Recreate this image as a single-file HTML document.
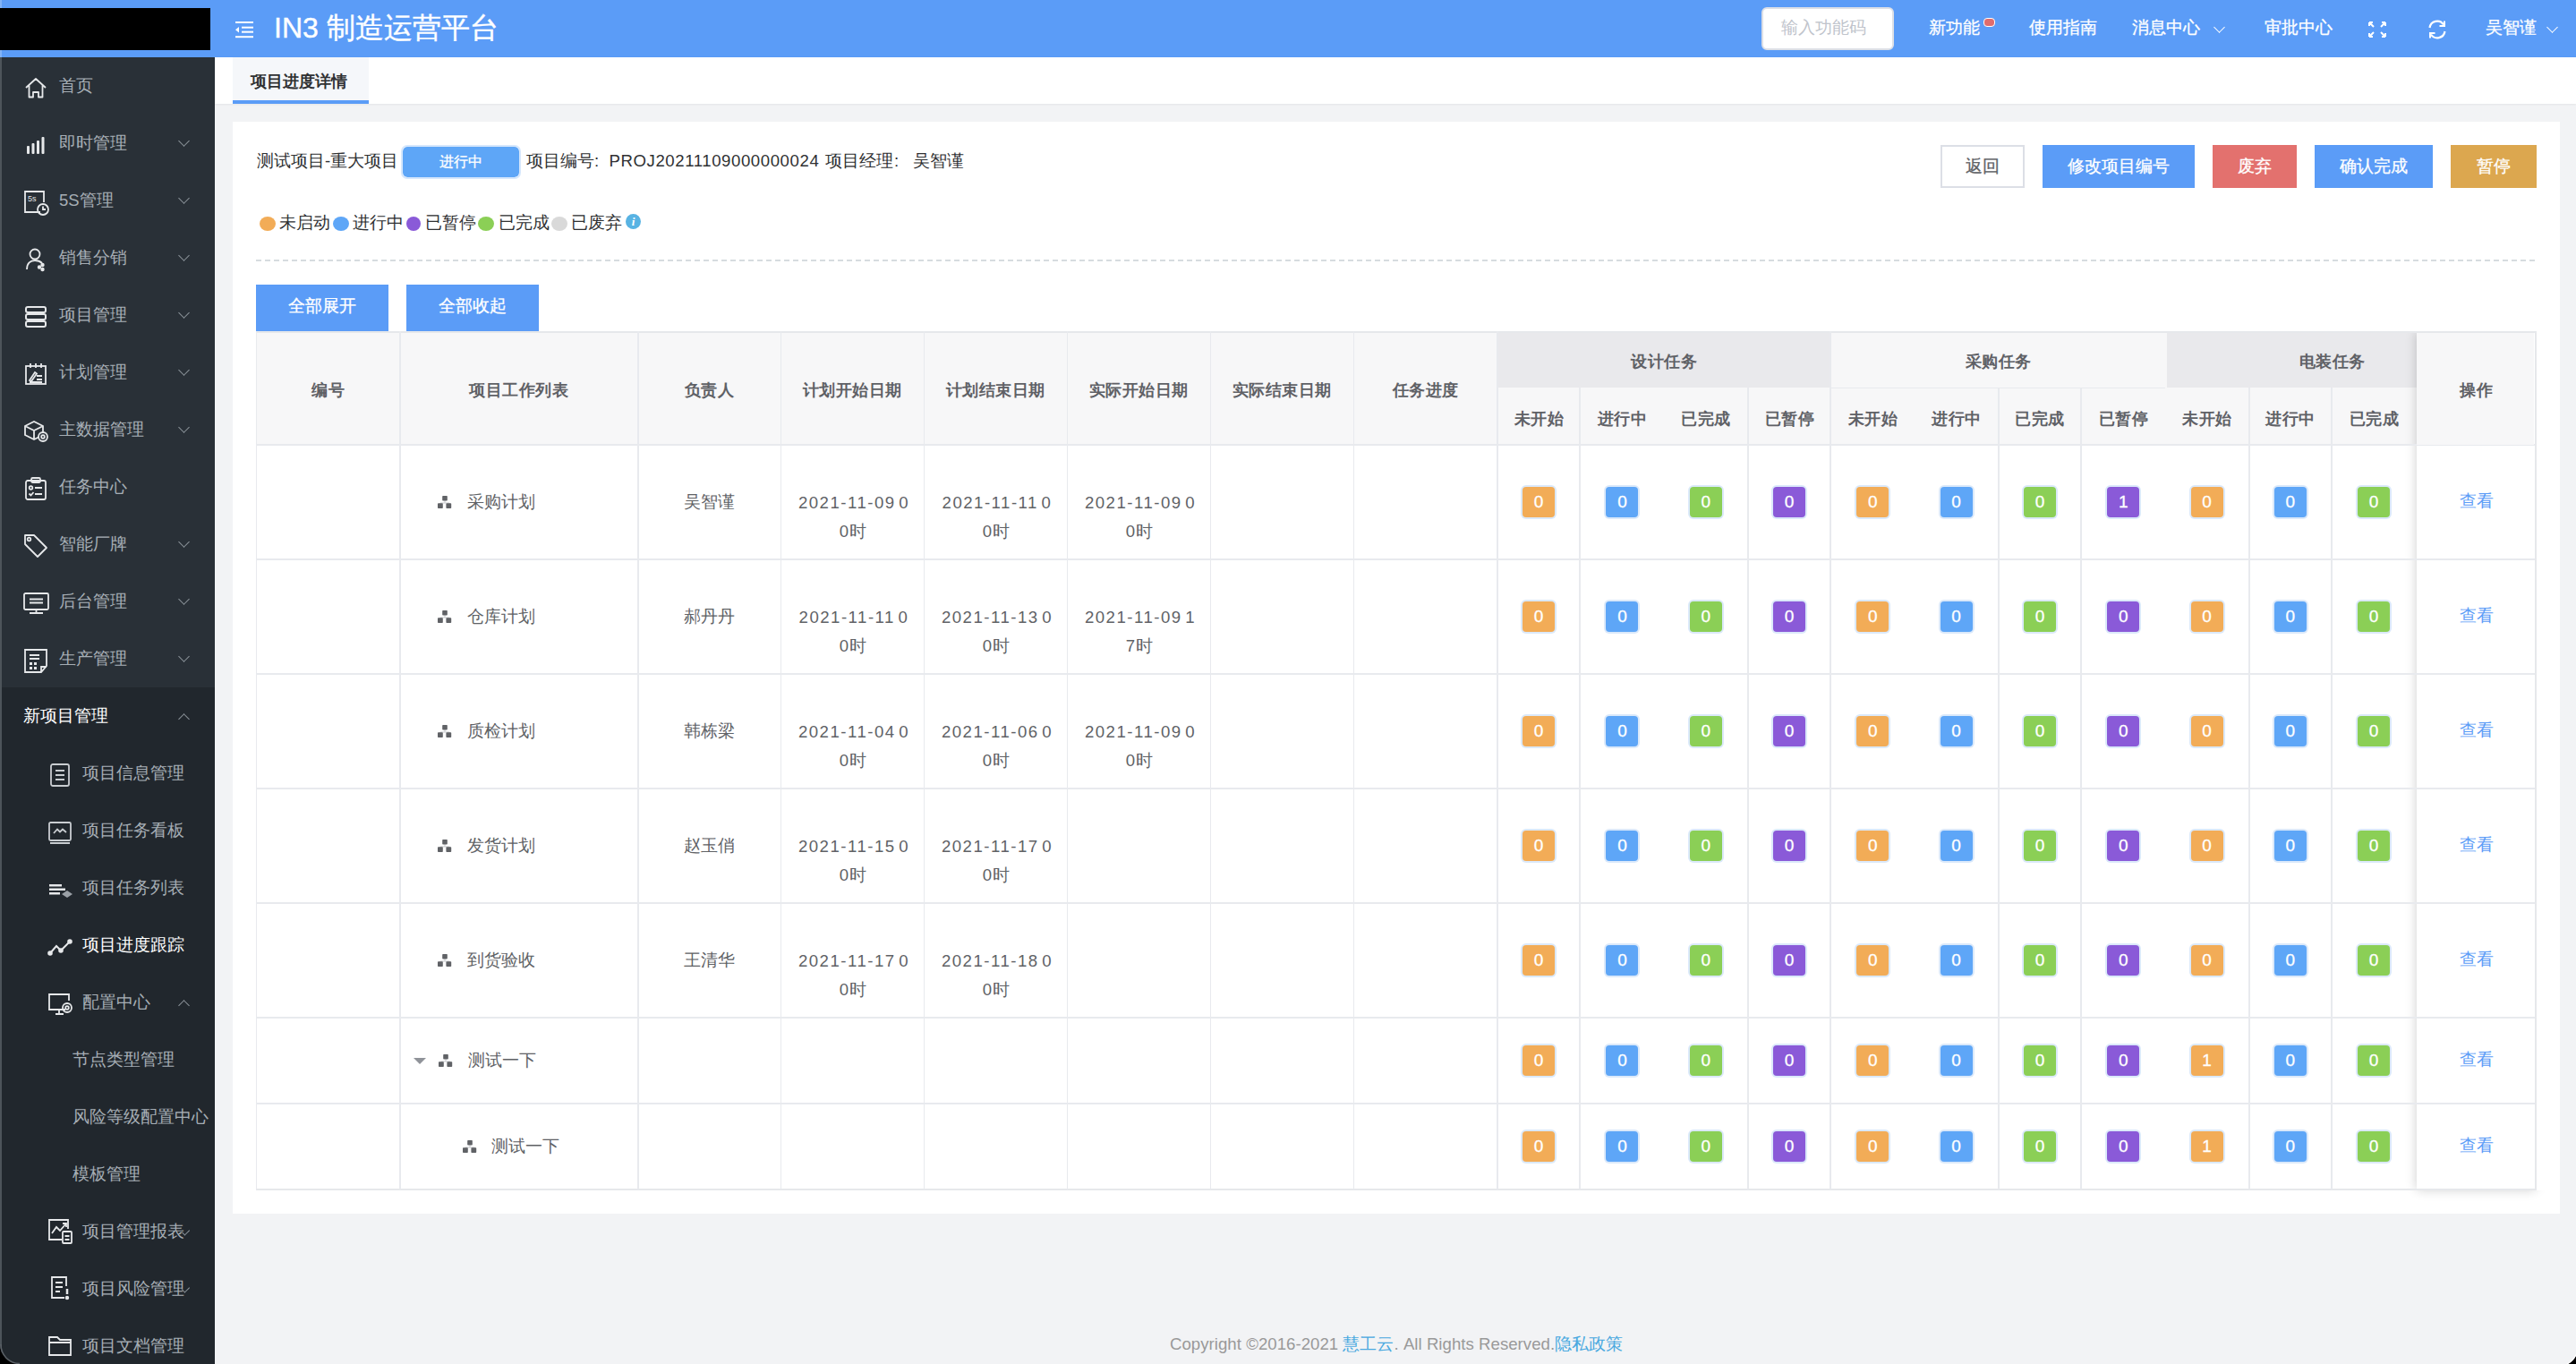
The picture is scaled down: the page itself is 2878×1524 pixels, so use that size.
<!DOCTYPE html><html><head><meta charset="utf-8"><title>IN3</title><style>
*{margin:0;padding:0;box-sizing:border-box}
html,body{width:2878px;height:1524px;overflow:hidden;background:#f2f3f5;font-family:"Liberation Sans",sans-serif;}
.abs{position:absolute}
.t{position:absolute;white-space:nowrap;line-height:32px;height:32px}
.hd{position:absolute;left:0;top:0;width:2878px;height:64px;background:#5b9cf7}
.hw{color:#fff;font-size:18.6px;-webkit-text-stroke:0.3px #fff}
.sb{position:absolute;left:0;top:64px;width:240px;height:1460px;background:#293037}
.sbt{color:#a6aeb5;font-size:18.5px}
.chev{position:absolute;width:9px;height:9px;border-right:1.6px solid #8d959c;border-bottom:1.6px solid #8d959c;transform:rotate(45deg)}
.chevu{position:absolute;width:9px;height:9px;border-left:1.6px solid #8d959c;border-top:1.6px solid #8d959c;transform:rotate(45deg)}
.btn{position:absolute;height:48px;line-height:48px;text-align:center;color:#fff;font-size:18.6px;-webkit-text-stroke:0.3px currentColor}
.hcell{position:absolute;text-align:center;color:#5f6166;font-weight:bold;font-size:18px;letter-spacing:0.5px;text-indent:0.5px;line-height:32px;white-space:nowrap}
.cell{position:absolute;text-align:center;color:#606266;font-size:18.6px;line-height:32px;white-space:nowrap}
.bd{position:absolute;width:36px;height:34px;border-radius:4px;color:#fff;font-size:19px;line-height:34px;text-align:center;box-shadow:0 0 0 2px #dbe9fa;-webkit-text-stroke:0.3px #fff}
.vl{position:absolute;width:1px;background:#e8eaee}
.hl{position:absolute;height:1px;background:#e8eaee}
</style></head><body>
<div class="hd"></div>
<div class="abs" style="left:0;top:0;width:2px;height:64px;background:#82b3f7"></div>
<div class="abs" style="left:0;top:9px;width:235px;height:47px;background:#000"></div>
<svg class="abs" style="left:262px;top:23px" width="22" height="20" viewBox="0 0 22 20"><rect x="1" y="1" width="20" height="2" fill="#fff"/><rect x="8" y="6.7" width="13" height="2" fill="#fff"/><rect x="8" y="11.7" width="13" height="2" fill="#fff"/><rect x="1" y="17.2" width="20" height="2" fill="#fff"/><path d="M1 10.2 L5 7 L5 13.4Z" fill="#fff"/></svg>
<div class="t" style="left:306px;top:11px;height:40px;line-height:40px;color:#fff;font-size:32px;-webkit-text-stroke:0.4px #fff">IN3 制造运营平台</div>
<div class="abs" style="left:1968px;top:8px;width:148px;height:48px;background:#fff;border:2px solid #dcdfe6;border-radius:6px"></div>
<div class="t" style="left:1990px;top:15px;color:#c0c4cc;font-size:18.6px">输入功能码</div>
<div class="t hw" style="left:2155px;top:15px">新功能</div>
<div class="abs" style="left:2215.5px;top:19.5px;width:13.5px;height:10px;border-radius:4px;background:#e06c6c;border:1.5px solid #fff"></div>
<div class="t hw" style="left:2267px;top:15px">使用指南</div>
<div class="t hw" style="left:2382px;top:15px">消息中心</div>
<div class="abs" style="left:2475px;top:26px;width:9px;height:9px;border-right:1.6px solid #fff;border-bottom:1.6px solid #fff;transform:rotate(45deg)"></div>
<div class="t hw" style="left:2530px;top:15px">审批中心</div>
<svg class="abs" style="left:2645px;top:23px" width="22" height="20" viewBox="0 0 22 20" fill="none" stroke="#fff" stroke-width="2"><path d="M2 2 L7 7 M2 2 L2 6 M2 2 L6 2"/><path d="M20 2 L15 7 M20 2 L20 6 M20 2 L16 2"/><path d="M2 18 L7 13 M2 18 L2 14 M2 18 L6 18"/><path d="M20 18 L15 13 M20 18 L20 14 M20 18 L16 18"/></svg>
<svg class="abs" style="left:2711px;top:21px" width="24" height="24" viewBox="0 0 24 24" fill="none" stroke="#fff" stroke-width="2.2"><path d="M3.5 10 A8.5 8.5 0 0 1 19 6.5"/><path d="M20.5 14 A8.5 8.5 0 0 1 5 17.5"/><path d="M20 2.5 L20 8 L14.5 8" stroke-width="2"/><path d="M4 21.5 L4 16 L9.5 16" stroke-width="2"/></svg>
<div class="t hw" style="left:2777px;top:15px">吴智谨</div>
<div class="abs" style="left:2847px;top:26px;width:9px;height:9px;border-right:1.6px solid #fff;border-bottom:1.6px solid #fff;transform:rotate(45deg)"></div>
<div class="sb"></div>
<div class="abs" style="left:0;top:768px;width:240px;height:756px;background:#21272d"></div>
<div class="abs" style="left:0;top:64px;width:2px;height:1460px;background:#4d545a"></div>
<div class="abs" style="left:26px;top:84px;width:30px;height:30px"><svg width="28" height="28" viewBox="0 0 28 28" fill="none" stroke="#e6e8ea" stroke-width="1.8" stroke-linejoin="round"><path d="M3 14 L14 4 L25 14 M6.5 11.5 V24.5 H11 V19 H17 V24.5 H21.5 V11.5"/></svg></div>
<div class="t sbt" style="left:66px;top:80px">首页</div>
<div class="abs" style="left:26px;top:148px;width:30px;height:30px"><svg width="28" height="28" viewBox="0 0 28 28" fill="#e6e8ea"><rect x="4" y="15" width="3" height="9" rx="1"/><rect x="9.5" y="12" width="3" height="12" rx="1"/><rect x="15" y="9" width="3" height="15" rx="1"/><rect x="20.5" y="5" width="3" height="19" rx="1"/></svg></div>
<div class="t sbt" style="left:66px;top:144px">即时管理</div>
<div class="chev" style="left:200.5px;top:153px"></div>
<div class="abs" style="left:26px;top:212px;width:30px;height:30px"><svg width="30" height="30" viewBox="0 0 30 30" fill="none" stroke="#e6e8ea" stroke-width="1.8"><path d="M19 25 H2 V2 H23 V14"/><text x="5" y="13" font-size="9" fill="#e6e8ea" stroke="none" font-family="Liberation Sans">5s</text><circle cx="22" cy="22" r="6"/><path d="M22 18.5 V22 H25"/></svg></div>
<div class="t sbt" style="left:66px;top:208px">5S管理</div>
<div class="chev" style="left:200.5px;top:217px"></div>
<div class="abs" style="left:26px;top:276px;width:30px;height:30px"><svg width="28" height="28" viewBox="0 0 28 28" fill="none" stroke="#e6e8ea" stroke-width="1.8"><circle cx="13" cy="8" r="5.5"/><path d="M4 25 C4 18 8 15 13 15 C17 15 19 16 21 18"/><circle cx="21.5" cy="20" r="1.3" fill="#e6e8ea"/><circle cx="18" cy="22.5" r="1.3" fill="#e6e8ea"/><circle cx="21.5" cy="25" r="1.3" fill="#e6e8ea"/></svg></div>
<div class="t sbt" style="left:66px;top:272px">销售分销</div>
<div class="chev" style="left:200.5px;top:281px"></div>
<div class="abs" style="left:26px;top:340px;width:30px;height:30px"><svg width="28" height="28" viewBox="0 0 28 28" fill="none" stroke="#e6e8ea" stroke-width="2"><rect x="3" y="3" width="22" height="6" rx="2"/><rect x="3" y="11" width="22" height="6" rx="2"/><rect x="3" y="19" width="22" height="6" rx="2"/></svg></div>
<div class="t sbt" style="left:66px;top:336px">项目管理</div>
<div class="chev" style="left:200.5px;top:345px"></div>
<div class="abs" style="left:26px;top:404px;width:30px;height:30px"><svg width="28" height="28" viewBox="0 0 28 28" fill="none" stroke="#e6e8ea" stroke-width="1.8"><rect x="3" y="5" width="22" height="20"/><path d="M8 2 V7 M14 2 V7 M20 2 V7"/><path d="M7 21 L13 12 L15 13.5 L9 22 Z M15 16 H21 M15 20 H21 M7 23 H21"/></svg></div>
<div class="t sbt" style="left:66px;top:400px">计划管理</div>
<div class="chev" style="left:200.5px;top:409px"></div>
<div class="abs" style="left:26px;top:468px;width:30px;height:30px"><svg width="30" height="28" viewBox="0 0 30 28" fill="none" stroke="#e6e8ea" stroke-width="1.8"><path d="M2 8 L12 3 L22 8 V18 L12 23 L2 18 Z M2 8 L12 13 L22 8 M12 13 V23"/><circle cx="22" cy="20" r="5" fill="#2a3139"/><circle cx="22" cy="20" r="1.8"/></svg></div>
<div class="t sbt" style="left:66px;top:464px">主数据管理</div>
<div class="chev" style="left:200.5px;top:473px"></div>
<div class="abs" style="left:26px;top:532px;width:30px;height:30px"><svg width="28" height="28" viewBox="0 0 28 28" fill="none" stroke="#e6e8ea" stroke-width="1.8"><rect x="3" y="5" width="22" height="21" rx="2"/><rect x="9" y="2" width="10" height="5" rx="1.5"/><circle cx="8.5" cy="13" r="1.8"/><path d="M13 13 H21 M6.5 19.5 L8.5 21.5 L11.5 18 M13 20 H21"/></svg></div>
<div class="t sbt" style="left:66px;top:528px">任务中心</div>
<div class="abs" style="left:26px;top:596px;width:30px;height:30px"><svg width="28" height="28" viewBox="0 0 28 28" fill="none" stroke="#e6e8ea" stroke-width="1.8" stroke-linejoin="round"><path d="M2 2 H12 L26 16 L16 26 L2 12 Z"/><circle cx="6.5" cy="6.5" r="1.8"/></svg></div>
<div class="t sbt" style="left:66px;top:592px">智能厂牌</div>
<div class="chev" style="left:200.5px;top:601px"></div>
<div class="abs" style="left:26px;top:660px;width:30px;height:30px"><svg width="30" height="28" viewBox="0 0 30 28" fill="none" stroke="#e6e8ea" stroke-width="1.8"><rect x="1" y="3" width="27" height="18" rx="1.5"/><path d="M7 9.5 H22 M7 13.5 H22 M14.5 21 V25 M7 25 H22"/></svg></div>
<div class="t sbt" style="left:66px;top:656px">后台管理</div>
<div class="chev" style="left:200.5px;top:665px"></div>
<div class="abs" style="left:26px;top:724px;width:30px;height:30px"><svg width="28" height="30" viewBox="0 0 28 30" fill="none" stroke="#e6e8ea" stroke-width="1.8"><path d="M2 2 H26 V20 L20 27 H2 Z M20 27 V21 H26"/><path d="M7 8 H18 M7 12 H18" /><rect x="7" y="16" width="3" height="3" fill="#e6e8ea" stroke="none"/><rect x="12" y="16" width="3" height="3" fill="#e6e8ea" stroke="none"/><rect x="7" y="21" width="3" height="3" fill="#e6e8ea" stroke="none"/><rect x="12" y="21" width="3" height="3" fill="#e6e8ea" stroke="none"/></svg></div>
<div class="t sbt" style="left:66px;top:720px">生产管理</div>
<div class="chev" style="left:200.5px;top:729px"></div>
<div class="t" style="left:26px;top:784px;color:#fff;font-size:18.5px">新项目管理</div>
<div class="chevu" style="left:201px;top:799px"></div>
<div class="abs" style="left:53px;top:852px;width:30px;height:30px"><svg width="28" height="28" viewBox="0 0 28 28" fill="none" stroke="#c9cdd1" stroke-width="1.8"><rect x="4" y="2" width="20" height="24" rx="2"/><path d="M9 9 H19 M9 14 H19 M9 19 H19"/></svg></div>
<div class="t" style="left:92px;top:848px;color:#a6aeb5;font-size:18.5px">项目信息管理</div>
<div class="abs" style="left:53px;top:916px;width:30px;height:30px"><svg width="28" height="28" viewBox="0 0 28 28" fill="none" stroke="#c9cdd1" stroke-width="1.8"><rect x="2" y="3" width="24" height="20" rx="1.5"/><path d="M7 15 L11 10.5 L14 13.5 L17 10.5 L21 14 M3 26 H25"/></svg></div>
<div class="t" style="left:92px;top:912px;color:#a6aeb5;font-size:18.5px">项目任务看板</div>
<div class="abs" style="left:53px;top:980px;width:30px;height:30px"><svg width="30" height="28" viewBox="0 0 30 28" fill="#e6e8ea"><rect x="2" y="8" width="14" height="2.5"/><rect x="2" y="12.5" width="18" height="2.5"/><rect x="2" y="17" width="12" height="2.5"/><path d="M16 19 L22 15 L28 19 L22 23 Z" fill="#9aa0a6"/></svg></div>
<div class="t" style="left:92px;top:976px;color:#a6aeb5;font-size:18.5px">项目任务列表</div>
<div class="abs" style="left:53px;top:1044px;width:30px;height:30px"><svg width="30" height="28" viewBox="0 0 30 28" fill="none" stroke="#e6e8ea" stroke-width="2"><path d="M3 21 L10 13 L15 18 L25 8"/><circle cx="3" cy="21" r="1.8" fill="#e6e8ea"/><circle cx="15" cy="18" r="1.8" fill="#e6e8ea"/><circle cx="25" cy="8" r="1.8" fill="#e6e8ea"/></svg></div>
<div class="t" style="left:92px;top:1040px;color:#ffffff;font-size:18.5px">项目进度跟踪</div>
<div class="abs" style="left:53px;top:1108px;width:30px;height:30px"><svg width="30" height="28" viewBox="0 0 30 28" fill="none" stroke="#e6e8ea" stroke-width="1.8"><path d="M20 20 H2 V3 H24 V10"/><path d="M9 25 H18 M13 20 V25"/><circle cx="22" cy="18" r="5"/><circle cx="22" cy="18" r="1.8"/></svg></div>
<div class="t" style="left:92px;top:1104px;color:#a6aeb5;font-size:18.5px">配置中心</div>
<div class="chevu" style="left:201px;top:1118.5px"></div>
<div class="t sbt" style="left:81px;top:1168px">节点类型管理</div>
<div class="t sbt" style="left:81px;top:1232px">风险等级配置中心</div>
<div class="t sbt" style="left:81px;top:1296px">模板管理</div>
<div class="abs" style="left:53px;top:1361px;width:30px;height:30px"><svg width="30" height="30" viewBox="0 0 30 30" fill="none" stroke="#e6e8ea" stroke-width="1.8"><path d="M16 24 H2 V2 H23 V12"/><path d="M5 17 L10 10 L14 14 L21 6 M17 6 H21 V10"/><rect x="17" y="15" width="10" height="13" rx="1"/><path d="M19.5 20 H24.5 M19.5 24 H24.5"/></svg></div>
<div class="t sbt" style="left:92px;top:1360px">项目管理报表</div>
<div class="abs" style="left:205px;top:1372px;width:5px;height:8px;border-right:1.2px solid #8d959c;border-bottom:1.2px solid #8d959c;transform:rotate(45deg)"></div>
<div class="abs" style="left:53px;top:1425px;width:30px;height:30px"><svg width="28" height="28" viewBox="0 0 28 28" fill="none" stroke="#e6e8ea" stroke-width="1.8"><path d="M19 25 H5 V2 H21 V12"/><path d="M9 8 H17 M9 13 H17 M9 18 H14"/><path d="M22 15 V21" stroke-width="2.5"/><circle cx="22" cy="25" r="1.3" fill="#e6e8ea"/></svg></div>
<div class="t sbt" style="left:92px;top:1424px">项目风险管理</div>
<div class="abs" style="left:205px;top:1436px;width:5px;height:8px;border-right:1.2px solid #8d959c;border-bottom:1.2px solid #8d959c;transform:rotate(45deg)"></div>
<div class="abs" style="left:53px;top:1489px;width:30px;height:30px"><svg width="28" height="28" viewBox="0 0 28 28" fill="none" stroke="#e6e8ea" stroke-width="1.8"><path d="M2 5 H11 L14 8 H26 V25 H2 Z M2 11 H26"/></svg></div>
<div class="t sbt" style="left:92px;top:1488px">项目文档管理</div>
<div class="abs" style="left:240px;top:64px;width:2638px;height:52px;background:#fff;box-shadow:0 1px 2px rgba(0,0,0,0.06)"></div>
<div class="abs" style="left:260px;top:64px;width:152px;height:52px;background:#f5f7fa"></div>
<div class="abs" style="left:260px;top:112px;width:152px;height:4px;background:#5b9cf7"></div>
<div class="t" style="left:280px;top:74.5px;color:#303133;font-size:18px;font-weight:600">项目进度详情</div>
<div class="abs" style="left:260px;top:136px;width:2600px;height:1220px;background:#fff"></div>
<div class="t" style="left:287px;top:164px;color:#303133;font-size:18.6px">测试项目-重大项目</div>
<div class="abs" style="left:448px;top:162px;width:134px;height:38px;background:#5ea6f7;background-clip:padding-box;border:2px solid #d6e7fc;border-radius:7px"></div>
<div class="t" style="left:449px;top:165px;width:132px;text-align:center;color:#fff;font-size:16px;-webkit-text-stroke:0.3px #fff">进行中</div>
<div class="t" style="left:587.5px;top:164px;color:#303133;font-size:18.6px;">项目编号</div>
<div class="t" style="left:664px;top:164px;color:#303133;font-size:18.6px;">:</div>
<div class="t" style="left:680.5px;top:164px;color:#303133;font-size:18.6px;letter-spacing:0.58px;">PROJ20211109000000024</div>
<div class="t" style="left:922px;top:164px;color:#303133;font-size:18.6px;">项目经理</div>
<div class="t" style="left:999px;top:164px;color:#303133;font-size:18.6px;">:</div>
<div class="t" style="left:1020px;top:164px;color:#303133;font-size:18.6px;">吴智谨</div>
<div class="btn" style="left:2168px;top:162px;width:94px;background:#fff;border:2px solid #dcdfe6;line-height:44px;color:#606266">返回</div>
<div class="btn" style="left:2282px;top:162px;width:170px;background:#5b9cf7">修改项目编号</div>
<div class="btn" style="left:2472px;top:162px;width:94px;background:#e3716e">废弃</div>
<div class="btn" style="left:2586px;top:162px;width:132px;background:#5b9cf7">确认完成</div>
<div class="btn" style="left:2738px;top:162px;width:96px;background:#dca74f">暂停</div>
<div class="abs" style="left:290px;top:242px;width:18px;height:16px;border-radius:50%;background:#f2ac57"></div>
<div class="t" style="left:312px;top:233px;color:#303133;font-size:18.6px">未启动</div>
<div class="abs" style="left:372px;top:242px;width:18px;height:16px;border-radius:50%;background:#5ea6f7"></div>
<div class="t" style="left:394px;top:233px;color:#303133;font-size:18.6px">进行中</div>
<div class="abs" style="left:454px;top:242px;width:16px;height:16px;border-radius:50%;background:#8a5ad8"></div>
<div class="t" style="left:475px;top:233px;color:#303133;font-size:18.6px">已暂停</div>
<div class="abs" style="left:534px;top:242px;width:18px;height:16px;border-radius:50%;background:#8bcf56"></div>
<div class="t" style="left:557px;top:233px;color:#303133;font-size:18.6px">已完成</div>
<div class="abs" style="left:616px;top:242px;width:18px;height:16px;border-radius:50%;background:#d9d9d9"></div>
<div class="t" style="left:638px;top:233px;color:#303133;font-size:18.6px">已废弃</div>
<div class="abs" style="left:699px;top:239px;width:17px;height:17px;border-radius:50%;background:#58b3e3;color:#fff;font:italic bold 13px/17px 'Liberation Serif',serif;text-align:center">i</div>
<div class="abs" style="left:286px;top:290px;width:2548px;height:2px;background:repeating-linear-gradient(90deg,#d6dcdf 0 6px,transparent 6px 10px)"></div>
<div class="btn" style="left:286px;top:318px;width:148px;height:52px;line-height:47px;background:#5b9cf7">全部展开</div>
<div class="btn" style="left:454px;top:318px;width:148px;height:52px;line-height:47px;background:#5b9cf7">全部收起</div>
<div class="abs" style="left:286px;top:370px;width:2548px;height:127px;background:#f7f7f8"></div>
<div class="abs" style="left:1673.5px;top:371px;width:372.20000000000005px;height:62px;background:#e9e9ec"></div>
<div class="abs" style="left:2420.9px;top:371px;width:279.0999999999999px;height:62px;background:#e9e9ec"></div>
<div class="hl" style="left:2045.7px;top:432.5px;width:373.20000000000005px"></div>
<div class="hcell" style="left:286px;top:419.5px;width:160.5px">编号</div>
<div class="hcell" style="left:446.5px;top:419.5px;width:266.0px">项目工作列表</div>
<div class="hcell" style="left:712.5px;top:419.5px;width:159.5px">负责人</div>
<div class="hcell" style="left:872px;top:419.5px;width:160px">计划开始日期</div>
<div class="hcell" style="left:1032px;top:419.5px;width:160px">计划结束日期</div>
<div class="hcell" style="left:1192px;top:419.5px;width:160px">实际开始日期</div>
<div class="hcell" style="left:1352px;top:419.5px;width:160px">实际结束日期</div>
<div class="hcell" style="left:1512px;top:419.5px;width:160.5px">任务进度</div>
<div class="hcell" style="left:1672.5px;top:387.5px;width:373.20000000000005px">设计任务</div>
<div class="hcell" style="left:2045.7px;top:387.5px;width:373.20000000000005px">采购任务</div>
<div class="hcell" style="left:2418.9px;top:387.5px;width:373.1999999999998px">电装任务</div>
<div class="hcell" style="left:1672.5px;top:451.5px;width:93.3px">未开始</div>
<div class="hcell" style="left:1765.8px;top:451.5px;width:93.3px">进行中</div>
<div class="hcell" style="left:1859.1px;top:451.5px;width:93.3px">已完成</div>
<div class="hcell" style="left:1952.4px;top:451.5px;width:93.3px">已暂停</div>
<div class="hcell" style="left:2045.7px;top:451.5px;width:93.3px">未开始</div>
<div class="hcell" style="left:2139.0px;top:451.5px;width:93.3px">进行中</div>
<div class="hcell" style="left:2232.3px;top:451.5px;width:93.3px">已完成</div>
<div class="hcell" style="left:2325.6px;top:451.5px;width:93.3px">已暂停</div>
<div class="hcell" style="left:2418.9px;top:451.5px;width:93.3px">未开始</div>
<div class="hcell" style="left:2512.2px;top:451.5px;width:93.3px">进行中</div>
<div class="hcell" style="left:2605.5px;top:451.5px;width:93.3px">已完成</div>
<div class="abs" style="left:2700px;top:371px;width:133px;height:958px;background:#fff;box-shadow:0 0 12px rgba(0,0,0,0.2)"></div>
<div class="abs" style="left:2834px;top:355px;width:20px;height:975px;background:#fff"></div>
<div class="abs" style="left:2670px;top:340px;width:180px;height:29.5px;background:#fff"></div>
<div class="abs" style="left:489px;top:554px;width:16px;height:15px"><svg width="16" height="15" viewBox="0 0 16 15"><path d="M8 5 V8 M3 10 V8 H13 V10" stroke="#c9cbcf" stroke-width="1" fill="none"/><rect x="5.2" y="0" width="5.6" height="5.6" rx="0.8" fill="#606266"/><rect x="0" y="8.2" width="5.8" height="5.8" rx="0.8" fill="#606266"/><rect x="9.4" y="8.2" width="5.8" height="5.8" rx="0.8" fill="#606266"/></svg></div>
<div class="cell" style="left:522px;top:545px;text-align:left">采购计划</div>
<div class="cell" style="left:712.5px;top:545px;width:159.5px">吴智谨</div>
<div class="cell" style="left:872px;top:546px;width:160px;letter-spacing:1.5px;word-spacing:-3px;text-indent:4px">2021-11-09 0</div>
<div class="cell" style="left:872px;top:578px;width:160px;letter-spacing:1.2px;text-indent:3px">0时</div>
<div class="cell" style="left:1032px;top:546px;width:160px;letter-spacing:1.5px;word-spacing:-3px;text-indent:4px">2021-11-11 0</div>
<div class="cell" style="left:1032px;top:578px;width:160px;letter-spacing:1.2px;text-indent:3px">0时</div>
<div class="cell" style="left:1192px;top:546px;width:160px;letter-spacing:1.5px;word-spacing:-3px;text-indent:4px">2021-11-09 0</div>
<div class="cell" style="left:1192px;top:578px;width:160px;letter-spacing:1.2px;text-indent:3px">0时</div>
<div class="bd" style="left:1701.15px;top:544px;background:#f2ac57">0</div>
<div class="bd" style="left:1794.45px;top:544px;background:#5ea6f7">0</div>
<div class="bd" style="left:1887.75px;top:544px;background:#8bcf56">0</div>
<div class="bd" style="left:1981.0500000000002px;top:544px;background:#8a5ad8">0</div>
<div class="bd" style="left:2074.35px;top:544px;background:#f2ac57">0</div>
<div class="bd" style="left:2167.65px;top:544px;background:#5ea6f7">0</div>
<div class="bd" style="left:2260.9500000000003px;top:544px;background:#8bcf56">0</div>
<div class="bd" style="left:2354.25px;top:544px;background:#8a5ad8">1</div>
<div class="bd" style="left:2447.55px;top:544px;background:#f2ac57">0</div>
<div class="bd" style="left:2540.85px;top:544px;background:#5ea6f7">0</div>
<div class="bd" style="left:2634.15px;top:544px;background:#8bcf56">0</div>
<div class="cell" style="left:2700px;top:544px;width:133px;color:#5b9cf7">查看</div>
<div class="abs" style="left:489px;top:682px;width:16px;height:15px"><svg width="16" height="15" viewBox="0 0 16 15"><path d="M8 5 V8 M3 10 V8 H13 V10" stroke="#c9cbcf" stroke-width="1" fill="none"/><rect x="5.2" y="0" width="5.6" height="5.6" rx="0.8" fill="#606266"/><rect x="0" y="8.2" width="5.8" height="5.8" rx="0.8" fill="#606266"/><rect x="9.4" y="8.2" width="5.8" height="5.8" rx="0.8" fill="#606266"/></svg></div>
<div class="cell" style="left:522px;top:673px;text-align:left">仓库计划</div>
<div class="cell" style="left:712.5px;top:673px;width:159.5px">郝丹丹</div>
<div class="cell" style="left:872px;top:674px;width:160px;letter-spacing:1.5px;word-spacing:-3px;text-indent:4px">2021-11-11 0</div>
<div class="cell" style="left:872px;top:706px;width:160px;letter-spacing:1.2px;text-indent:3px">0时</div>
<div class="cell" style="left:1032px;top:674px;width:160px;letter-spacing:1.5px;word-spacing:-3px;text-indent:4px">2021-11-13 0</div>
<div class="cell" style="left:1032px;top:706px;width:160px;letter-spacing:1.2px;text-indent:3px">0时</div>
<div class="cell" style="left:1192px;top:674px;width:160px;letter-spacing:1.5px;word-spacing:-3px;text-indent:4px">2021-11-09 1</div>
<div class="cell" style="left:1192px;top:706px;width:160px;letter-spacing:1.2px;text-indent:3px">7时</div>
<div class="bd" style="left:1701.15px;top:672px;background:#f2ac57">0</div>
<div class="bd" style="left:1794.45px;top:672px;background:#5ea6f7">0</div>
<div class="bd" style="left:1887.75px;top:672px;background:#8bcf56">0</div>
<div class="bd" style="left:1981.0500000000002px;top:672px;background:#8a5ad8">0</div>
<div class="bd" style="left:2074.35px;top:672px;background:#f2ac57">0</div>
<div class="bd" style="left:2167.65px;top:672px;background:#5ea6f7">0</div>
<div class="bd" style="left:2260.9500000000003px;top:672px;background:#8bcf56">0</div>
<div class="bd" style="left:2354.25px;top:672px;background:#8a5ad8">0</div>
<div class="bd" style="left:2447.55px;top:672px;background:#f2ac57">0</div>
<div class="bd" style="left:2540.85px;top:672px;background:#5ea6f7">0</div>
<div class="bd" style="left:2634.15px;top:672px;background:#8bcf56">0</div>
<div class="cell" style="left:2700px;top:672px;width:133px;color:#5b9cf7">查看</div>
<div class="abs" style="left:489px;top:810px;width:16px;height:15px"><svg width="16" height="15" viewBox="0 0 16 15"><path d="M8 5 V8 M3 10 V8 H13 V10" stroke="#c9cbcf" stroke-width="1" fill="none"/><rect x="5.2" y="0" width="5.6" height="5.6" rx="0.8" fill="#606266"/><rect x="0" y="8.2" width="5.8" height="5.8" rx="0.8" fill="#606266"/><rect x="9.4" y="8.2" width="5.8" height="5.8" rx="0.8" fill="#606266"/></svg></div>
<div class="cell" style="left:522px;top:801px;text-align:left">质检计划</div>
<div class="cell" style="left:712.5px;top:801px;width:159.5px">韩栋梁</div>
<div class="cell" style="left:872px;top:802px;width:160px;letter-spacing:1.5px;word-spacing:-3px;text-indent:4px">2021-11-04 0</div>
<div class="cell" style="left:872px;top:834px;width:160px;letter-spacing:1.2px;text-indent:3px">0时</div>
<div class="cell" style="left:1032px;top:802px;width:160px;letter-spacing:1.5px;word-spacing:-3px;text-indent:4px">2021-11-06 0</div>
<div class="cell" style="left:1032px;top:834px;width:160px;letter-spacing:1.2px;text-indent:3px">0时</div>
<div class="cell" style="left:1192px;top:802px;width:160px;letter-spacing:1.5px;word-spacing:-3px;text-indent:4px">2021-11-09 0</div>
<div class="cell" style="left:1192px;top:834px;width:160px;letter-spacing:1.2px;text-indent:3px">0时</div>
<div class="bd" style="left:1701.15px;top:800px;background:#f2ac57">0</div>
<div class="bd" style="left:1794.45px;top:800px;background:#5ea6f7">0</div>
<div class="bd" style="left:1887.75px;top:800px;background:#8bcf56">0</div>
<div class="bd" style="left:1981.0500000000002px;top:800px;background:#8a5ad8">0</div>
<div class="bd" style="left:2074.35px;top:800px;background:#f2ac57">0</div>
<div class="bd" style="left:2167.65px;top:800px;background:#5ea6f7">0</div>
<div class="bd" style="left:2260.9500000000003px;top:800px;background:#8bcf56">0</div>
<div class="bd" style="left:2354.25px;top:800px;background:#8a5ad8">0</div>
<div class="bd" style="left:2447.55px;top:800px;background:#f2ac57">0</div>
<div class="bd" style="left:2540.85px;top:800px;background:#5ea6f7">0</div>
<div class="bd" style="left:2634.15px;top:800px;background:#8bcf56">0</div>
<div class="cell" style="left:2700px;top:800px;width:133px;color:#5b9cf7">查看</div>
<div class="abs" style="left:489px;top:938px;width:16px;height:15px"><svg width="16" height="15" viewBox="0 0 16 15"><path d="M8 5 V8 M3 10 V8 H13 V10" stroke="#c9cbcf" stroke-width="1" fill="none"/><rect x="5.2" y="0" width="5.6" height="5.6" rx="0.8" fill="#606266"/><rect x="0" y="8.2" width="5.8" height="5.8" rx="0.8" fill="#606266"/><rect x="9.4" y="8.2" width="5.8" height="5.8" rx="0.8" fill="#606266"/></svg></div>
<div class="cell" style="left:522px;top:929px;text-align:left">发货计划</div>
<div class="cell" style="left:712.5px;top:929px;width:159.5px">赵玉俏</div>
<div class="cell" style="left:872px;top:930px;width:160px;letter-spacing:1.5px;word-spacing:-3px;text-indent:4px">2021-11-15 0</div>
<div class="cell" style="left:872px;top:962px;width:160px;letter-spacing:1.2px;text-indent:3px">0时</div>
<div class="cell" style="left:1032px;top:930px;width:160px;letter-spacing:1.5px;word-spacing:-3px;text-indent:4px">2021-11-17 0</div>
<div class="cell" style="left:1032px;top:962px;width:160px;letter-spacing:1.2px;text-indent:3px">0时</div>
<div class="bd" style="left:1701.15px;top:928px;background:#f2ac57">0</div>
<div class="bd" style="left:1794.45px;top:928px;background:#5ea6f7">0</div>
<div class="bd" style="left:1887.75px;top:928px;background:#8bcf56">0</div>
<div class="bd" style="left:1981.0500000000002px;top:928px;background:#8a5ad8">0</div>
<div class="bd" style="left:2074.35px;top:928px;background:#f2ac57">0</div>
<div class="bd" style="left:2167.65px;top:928px;background:#5ea6f7">0</div>
<div class="bd" style="left:2260.9500000000003px;top:928px;background:#8bcf56">0</div>
<div class="bd" style="left:2354.25px;top:928px;background:#8a5ad8">0</div>
<div class="bd" style="left:2447.55px;top:928px;background:#f2ac57">0</div>
<div class="bd" style="left:2540.85px;top:928px;background:#5ea6f7">0</div>
<div class="bd" style="left:2634.15px;top:928px;background:#8bcf56">0</div>
<div class="cell" style="left:2700px;top:928px;width:133px;color:#5b9cf7">查看</div>
<div class="abs" style="left:489px;top:1066px;width:16px;height:15px"><svg width="16" height="15" viewBox="0 0 16 15"><path d="M8 5 V8 M3 10 V8 H13 V10" stroke="#c9cbcf" stroke-width="1" fill="none"/><rect x="5.2" y="0" width="5.6" height="5.6" rx="0.8" fill="#606266"/><rect x="0" y="8.2" width="5.8" height="5.8" rx="0.8" fill="#606266"/><rect x="9.4" y="8.2" width="5.8" height="5.8" rx="0.8" fill="#606266"/></svg></div>
<div class="cell" style="left:522px;top:1057px;text-align:left">到货验收</div>
<div class="cell" style="left:712.5px;top:1057px;width:159.5px">王清华</div>
<div class="cell" style="left:872px;top:1058px;width:160px;letter-spacing:1.5px;word-spacing:-3px;text-indent:4px">2021-11-17 0</div>
<div class="cell" style="left:872px;top:1090px;width:160px;letter-spacing:1.2px;text-indent:3px">0时</div>
<div class="cell" style="left:1032px;top:1058px;width:160px;letter-spacing:1.5px;word-spacing:-3px;text-indent:4px">2021-11-18 0</div>
<div class="cell" style="left:1032px;top:1090px;width:160px;letter-spacing:1.2px;text-indent:3px">0时</div>
<div class="bd" style="left:1701.15px;top:1056px;background:#f2ac57">0</div>
<div class="bd" style="left:1794.45px;top:1056px;background:#5ea6f7">0</div>
<div class="bd" style="left:1887.75px;top:1056px;background:#8bcf56">0</div>
<div class="bd" style="left:1981.0500000000002px;top:1056px;background:#8a5ad8">0</div>
<div class="bd" style="left:2074.35px;top:1056px;background:#f2ac57">0</div>
<div class="bd" style="left:2167.65px;top:1056px;background:#5ea6f7">0</div>
<div class="bd" style="left:2260.9500000000003px;top:1056px;background:#8bcf56">0</div>
<div class="bd" style="left:2354.25px;top:1056px;background:#8a5ad8">0</div>
<div class="bd" style="left:2447.55px;top:1056px;background:#f2ac57">0</div>
<div class="bd" style="left:2540.85px;top:1056px;background:#5ea6f7">0</div>
<div class="bd" style="left:2634.15px;top:1056px;background:#8bcf56">0</div>
<div class="cell" style="left:2700px;top:1056px;width:133px;color:#5b9cf7">查看</div>
<div class="abs" style="left:462px;top:1181.5px;width:0;height:0;border-left:7.5px solid transparent;border-right:7.5px solid transparent;border-top:7.5px solid #909399"></div>
<div class="abs" style="left:490px;top:1178px;width:16px;height:15px"><svg width="16" height="15" viewBox="0 0 16 15"><path d="M8 5 V8 M3 10 V8 H13 V10" stroke="#c9cbcf" stroke-width="1" fill="none"/><rect x="5.2" y="0" width="5.6" height="5.6" rx="0.8" fill="#606266"/><rect x="0" y="8.2" width="5.8" height="5.8" rx="0.8" fill="#606266"/><rect x="9.4" y="8.2" width="5.8" height="5.8" rx="0.8" fill="#606266"/></svg></div>
<div class="cell" style="left:523px;top:1169px;text-align:left">测试一下</div>
<div class="bd" style="left:1701.15px;top:1168px;background:#f2ac57">0</div>
<div class="bd" style="left:1794.45px;top:1168px;background:#5ea6f7">0</div>
<div class="bd" style="left:1887.75px;top:1168px;background:#8bcf56">0</div>
<div class="bd" style="left:1981.0500000000002px;top:1168px;background:#8a5ad8">0</div>
<div class="bd" style="left:2074.35px;top:1168px;background:#f2ac57">0</div>
<div class="bd" style="left:2167.65px;top:1168px;background:#5ea6f7">0</div>
<div class="bd" style="left:2260.9500000000003px;top:1168px;background:#8bcf56">0</div>
<div class="bd" style="left:2354.25px;top:1168px;background:#8a5ad8">0</div>
<div class="bd" style="left:2447.55px;top:1168px;background:#f2ac57">1</div>
<div class="bd" style="left:2540.85px;top:1168px;background:#5ea6f7">0</div>
<div class="bd" style="left:2634.15px;top:1168px;background:#8bcf56">0</div>
<div class="cell" style="left:2700px;top:1168px;width:133px;color:#5b9cf7">查看</div>
<div class="abs" style="left:517px;top:1274px;width:16px;height:15px"><svg width="16" height="15" viewBox="0 0 16 15"><path d="M8 5 V8 M3 10 V8 H13 V10" stroke="#c9cbcf" stroke-width="1" fill="none"/><rect x="5.2" y="0" width="5.6" height="5.6" rx="0.8" fill="#606266"/><rect x="0" y="8.2" width="5.8" height="5.8" rx="0.8" fill="#606266"/><rect x="9.4" y="8.2" width="5.8" height="5.8" rx="0.8" fill="#606266"/></svg></div>
<div class="cell" style="left:549px;top:1265px;text-align:left">测试一下</div>
<div class="bd" style="left:1701.15px;top:1264px;background:#f2ac57">0</div>
<div class="bd" style="left:1794.45px;top:1264px;background:#5ea6f7">0</div>
<div class="bd" style="left:1887.75px;top:1264px;background:#8bcf56">0</div>
<div class="bd" style="left:1981.0500000000002px;top:1264px;background:#8a5ad8">0</div>
<div class="bd" style="left:2074.35px;top:1264px;background:#f2ac57">0</div>
<div class="bd" style="left:2167.65px;top:1264px;background:#5ea6f7">0</div>
<div class="bd" style="left:2260.9500000000003px;top:1264px;background:#8bcf56">0</div>
<div class="bd" style="left:2354.25px;top:1264px;background:#8a5ad8">0</div>
<div class="bd" style="left:2447.55px;top:1264px;background:#f2ac57">1</div>
<div class="bd" style="left:2540.85px;top:1264px;background:#5ea6f7">0</div>
<div class="bd" style="left:2634.15px;top:1264px;background:#8bcf56">0</div>
<div class="cell" style="left:2700px;top:1264px;width:133px;color:#5b9cf7">查看</div>
<div class="hl" style="left:286px;top:369.5px;width:2548px;height:2px;background:#e6e8eb"></div>
<div class="hl" style="left:286px;top:496.0px;width:2548px;height:1.5px"></div>
<div class="hl" style="left:286px;top:624.0px;width:2548px;height:1.5px"></div>
<div class="hl" style="left:286px;top:752.0px;width:2548px;height:1.5px"></div>
<div class="hl" style="left:286px;top:880.0px;width:2548px;height:1.5px"></div>
<div class="hl" style="left:286px;top:1008.0px;width:2548px;height:1.5px"></div>
<div class="hl" style="left:286px;top:1136.0px;width:2548px;height:1.5px"></div>
<div class="hl" style="left:286px;top:1232.0px;width:2548px;height:1.5px"></div>
<div class="hl" style="left:286px;top:1327.5px;width:2548px;height:2px;background:#e6e8eb"></div>
<div class="vl" style="left:285.5px;top:370px;height:959px;width:1.5px"></div>
<div class="vl" style="left:446.0px;top:370px;height:959px;width:1.5px"></div>
<div class="vl" style="left:712.0px;top:370px;height:959px;width:1.5px"></div>
<div class="vl" style="left:871.5px;top:370px;height:959px;width:1.5px"></div>
<div class="vl" style="left:1031.5px;top:370px;height:959px;width:1.5px"></div>
<div class="vl" style="left:1191.5px;top:370px;height:959px;width:1.5px"></div>
<div class="vl" style="left:1351.5px;top:370px;height:959px;width:1.5px"></div>
<div class="vl" style="left:1511.5px;top:370px;height:959px;width:1.5px"></div>
<div class="vl" style="left:1672.0px;top:370px;height:959px;width:1.5px"></div>
<div class="vl" style="left:1764.0px;top:433px;height:896px;width:1.5px"></div>
<div class="vl" style="left:1952.0px;top:433px;height:896px;width:1.5px"></div>
<div class="vl" style="left:2044.0px;top:370px;height:959px;width:1.5px"></div>
<div class="vl" style="left:2232.0px;top:433px;height:896px;width:1.5px"></div>
<div class="vl" style="left:2324.0px;top:433px;height:896px;width:1.5px"></div>
<div class="vl" style="left:2512.0px;top:433px;height:896px;width:1.5px"></div>
<div class="vl" style="left:2604.0px;top:433px;height:896px;width:1.5px"></div>
<div class="vl" style="left:2832px;top:370px;height:959px;width:2px;background:#e6e8eb"></div>
<div class="abs" style="left:2700px;top:371.5px;width:131px;height:125px;background:#f7f7f8"></div>
<div class="hcell" style="left:2700px;top:419.5px;width:133px">操作</div>
<svg class="abs" style="left:0;top:1502px" width="24" height="22" viewBox="0 0 24 22"><path d="M0 0 L0 22 L22 22 A22 22 0 0 1 0 0Z" fill="#000"/><path d="M1 0 A21 21 0 0 0 22 21.5" stroke="#5a6066" stroke-width="1.5" fill="none"/></svg>
<svg class="abs" style="left:2856px;top:1502px" width="22" height="22" viewBox="0 0 22 22"><path d="M22 12.5 A22 22 0 0 1 13 22 L22 22Z" fill="#000"/><path d="M22 11.5 A22 22 0 0 1 12 22" stroke="#fff" stroke-width="1.2" fill="none"/></svg>
<div class="t" style="left:1307px;top:1486px;color:#999;font-size:18.6px;letter-spacing:0.04px">Copyright ©2016-2021 <span style="color:#4aa9e0">慧工云</span>. All Rights Reserved.<span style="color:#4aa9e0">隐私政策</span></div>
</body></html>
